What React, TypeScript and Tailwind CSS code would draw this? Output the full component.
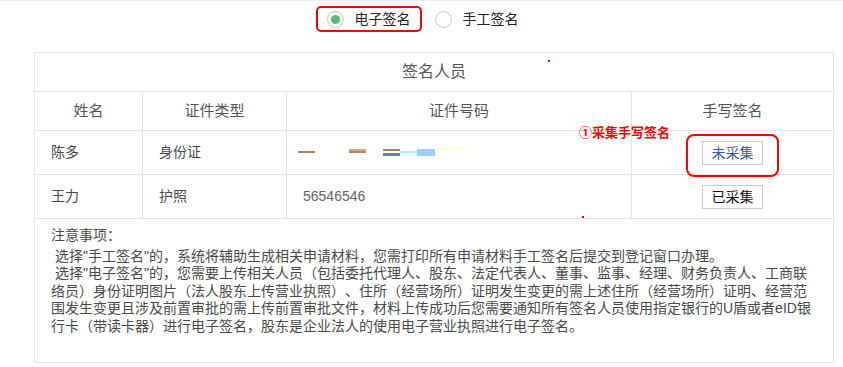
const font = "font-['Liberation_Sans','Noto_Sans_CJK_SC',sans-serif]";

function Radio({ checked, label }: { checked?: boolean; label: string }) {
  return (
    <span className="flex items-center">
      <span
        className={`flex h-[17px] w-[17px] items-center justify-center rounded-full border ${
          checked ? "border-[#a9d4b8]" : "border-[#c6c6c6]"
        }`}
      >
        {checked && <span className="h-[9px] w-[9px] rounded-full bg-[#5cb87a]" />}
      </span>
      <span className="ml-[11px] text-[14px] leading-none text-[#222]">{label}</span>
    </span>
  );
}

function Redacted() {
  // blurred id number, drawn as colour strips
  return (
    <svg width="190" height="10" className="-ml-[16px] block">
      <rect x="11" y="3" width="17" height="2" fill="#b8836a" />
      <rect x="62" y="1" width="17" height="2" fill="#e5a973" />
      <rect x="62" y="3" width="17" height="2" fill="#b8836a" />
      <rect x="96" y="1" width="17" height="2" fill="#b57a64" />
      <rect x="96" y="5" width="17" height="3" fill="#6480b4" />
      <rect x="113" y="3" width="17" height="2" fill="#b8e6ff" />
      <rect x="113" y="5" width="17" height="3" fill="#e4f9ff" />
      <rect x="130" y="1" width="18" height="7" fill="#9dcfff" />
      <rect x="148" y="0" width="34" height="2" fill="#ffffd5" />
    </svg>
  );
}

function CollectButton({ done }: { done?: boolean }) {
  return (
    <button
      className={`flex h-[24px] w-[61px] items-center justify-center border border-[#cccccc] bg-white text-[14px] leading-none ${
        done ? "text-[#111]" : "text-[#2a5caa]"
      }`}
    >
      {done ? "已采集" : "未采集"}
    </button>
  );
}

export default function App() {
  const cell = "flex items-center border-r border-[#e4e4e4] px-[16px] text-[14px] text-[#4a4a4a]";
  const head = "flex items-center justify-center border-r border-[#e4e4e4] text-[15px] text-[#555]";

  return (
    <div className={`min-h-[367px] w-[843px] bg-white ${font} [text-spacing-trim:space-all]`}>
      {/* signature type */}
      <div className="flex justify-center border-t border-[#eeeeee] pt-[5px] pr-[9px]">
        <div className="flex items-center">
          <label className="flex h-[26px] items-center rounded-[5px] border-2 border-[#f00] pl-[9px] pr-[9px]">
            <Radio checked label="电子签名" />
          </label>
          <label className="ml-[13px] flex h-[26px] items-center">
            <Radio label="手工签名" />
          </label>
        </div>
      </div>

      <div className="relative mt-[20px] ml-[34px] w-[800px] border border-[#e4e4e4]">
        <div className="flex h-[39px] items-center justify-center border-b border-[#e4e4e4] text-[16px] text-[#555]">
          签名人员
        </div>

        <div className="grid grid-cols-[108px_144px_345px_1fr]">
          <div className={`${head} h-[39px] border-b`}>姓名</div>
          <div className={`${head} h-[39px] border-b`}>证件类型</div>
          <div className={`${head} h-[39px] border-b`}>证件号码</div>
          <div className={`${head} h-[39px] border-b border-r-0`}>手写签名</div>

          <div className={`${cell} h-[44px] border-b`}>陈多</div>
          <div className={`${cell} h-[44px] border-b`}>身份证</div>
          <div className={`${cell} h-[44px] border-b`}>
            <Redacted />
          </div>
          <div className={`${cell} relative h-[44px] justify-center border-b border-r-0`}>
            <CollectButton />
            <div className="absolute left-[54px] top-[3px] h-[43px] w-[93px] rounded-[8px] border-2 border-[#f00]" />
          </div>

          <div className={`${cell} h-[44px] border-b`}>王力</div>
          <div className={`${cell} h-[44px] border-b`}>护照</div>
          <div className={`${cell} h-[44px] border-b text-[#666]`}>56546546</div>
          <div className={`${cell} h-[44px] justify-center border-b border-r-0`}>
            <CollectButton done />
          </div>
        </div>

        <div className="h-[143px] pt-[8px] pl-[16px] pr-[8px] text-[14px] leading-[17.5px] text-[#4a4a4a]">
          <p className="mb-[3px]">注意事项：</p>
          <p className="indent-[4px]">
            选择"手工签名"的，系统将辅助生成相关申请材料，您需打印所有申请材料手工签名后提交到登记窗口办理。
          </p>
          <p className="indent-[4px]">
            选择"电子签名"的，您需要上传相关人员（包括委托代理人、股东、法定代表人、董事、监事、经理、财务负责人、工商联
            <br />
            络员）身份证明图片（法人股东上传营业执照）、住所（经营场所）证明发生变更的需上述住所（经营场所）证明、经营范
            <br />
            围发生变更且涉及前置审批的需上传前置审批文件，材料上传成功后您需要通知所有签名人员使用指定银行的U盾或者eID银
            <br />
            行卡（带读卡器）进行电子签名，股东是企业法人的使用电子营业执照进行电子签名。
          </p>
        </div>

        {/* annotation */}
        <div className="absolute left-[544px] top-[72px] font-['Noto_Sans_CJK_SC',sans-serif] text-[13px] font-bold leading-[14px] text-[#f00]">
          ①采集手写签名
        </div>
        <span className="absolute left-[513px] top-[7px] h-[2px] w-[2px] bg-[#f00]" />
        <span className="absolute left-[547px] top-[163px] h-[2px] w-[2px] bg-[#f00]" />
      </div>
    </div>
  );
}
